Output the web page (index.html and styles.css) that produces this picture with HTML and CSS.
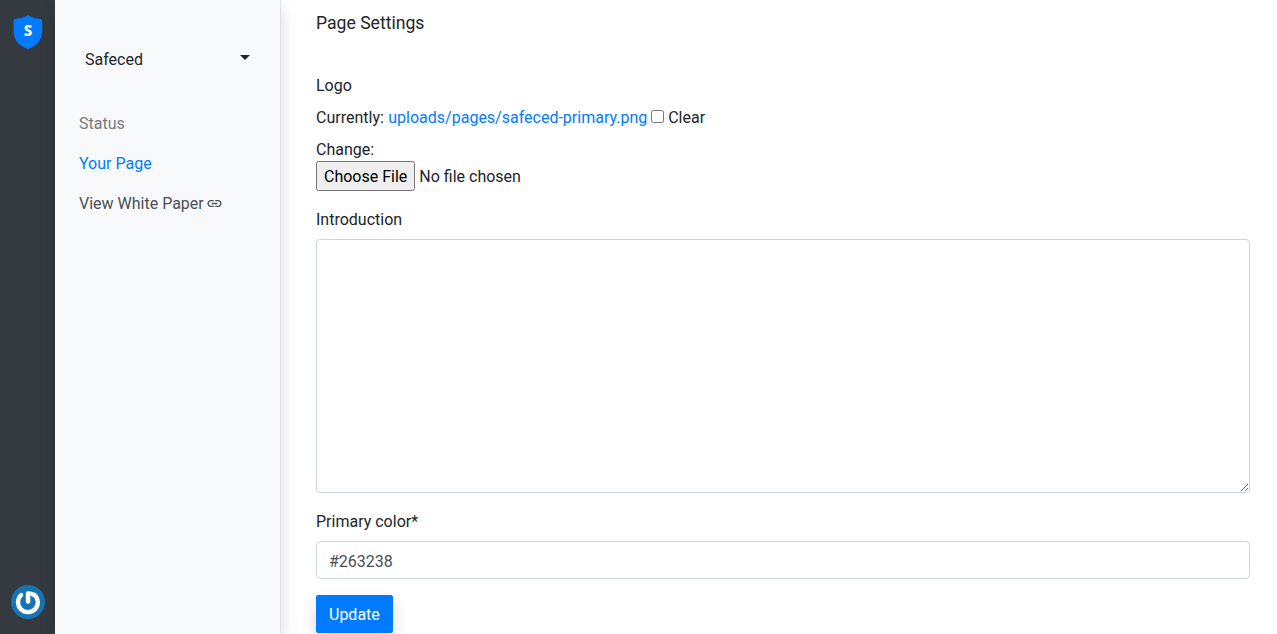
FILE: index.html
```html
<!DOCTYPE html>
<html lang="en">
<head>
<meta charset="utf-8">
<title>Page Settings</title>
<link rel="stylesheet" href="styles.css">
</head>
<body>
<div class="app">
  <aside class="rail">
    <a class="brand">
      <svg width="29" height="34" viewBox="0 0 29 34"><path fill="#007bff" d="M14.900 0C17.900 2.200 22.700 3.600 27.800 4.100Q29.200 4.300 29.200 5.700V16C29.200 25 23.800 30.700 14.900 34C6 30.700 .6 25 .6 16V5.700Q.6 4.300 2 4.100C7.100 3.600 11.900 2.200 14.900 0Z"/><text class="brand-letter" x="15" y="20.500" text-anchor="middle">S</text></svg>
    </a>
    <svg class="avatar" width="34" height="34" viewBox="0 0 34 34"><circle cx="17" cy="17" r="17" fill="#1774b3"/><path d="M10.200 10A9.900 9.900 0 1 0 23.400 9.800" fill="none" stroke="#fff" stroke-width="4.300" stroke-linecap="round"/><path d="M14.800 8.200Q14.800 6.200 17 6.200Q21 6.300 24.500 8.500L22 12L19.300 10.300V17Q19.300 18.800 17 18.800Q14.800 18.800 14.800 17Z" fill="#fff"/></svg>
  </aside>
  <nav class="sidebar">
    <div class="project"><span>Safeced</span><i class="caret"></i></div>
    <a class="nav-item muted">Status</a>
    <a class="nav-item active">Your Page</a>
    <a class="nav-item">View White Paper
      <svg class="link-icon" width="17" height="17" viewBox="0 0 24 24"><path fill="currentColor" d="M3.900 12c0-1.710 1.390-3.100 3.100-3.100h4V7H7c-2.760 0-5 2.240-5 5s2.240 5 5 5h4v-1.900H7c-1.710 0-3.100-1.390-3.100-3.100zM8 13h8v-2H8v2zm9-6h-4v1.900h4c1.710 0 3.100 1.390 3.100 3.100s-1.390 3.100-3.100 3.100h-4V17h4c2.760 0 5-2.240 5-5s-2.240-5-5-5z"/></svg>
    </a>
  </nav>
  <main class="content">
    <h1 class="title">Page Settings</h1>
    <form>
      <div class="group">
        <label class="label">Logo</label>
        <div class="current">Currently: <a class="link">uploads/pages/safeced-primary.png</a><input class="check" type="checkbox" id="clear"><label for="clear">Clear</label></div>
        <div class="change">Change:</div>
        <input class="file" type="file">
      </div>
      <div class="group">
        <label class="label" for="intro">Introduction</label>
        <textarea class="control area" id="intro"></textarea>
      </div>
      <div class="group">
        <label class="label" for="color">Primary color*</label>
        <input class="control" id="color" type="text" value="#263238">
      </div>
      <button class="button" type="button">Update</button>
    </form>
  </main>
</div>
</body>
</html>
```
FILE: styles.css
```css
*, *::before, *::after { box-sizing: border-box; }
body {
  margin: 0;
  font: 16px/24px Roboto, sans-serif;
  color: #212529;
  background: #fff;
}
.app { display: flex; height: 100vh; overflow: hidden; }
.rail {
  width: 55px;
  padding: 15px 0;
  background: #343a40;
  display: flex;
  flex-direction: column;
  justify-content: space-between;
  align-items: center;
}
.brand, .brand svg, .avatar { display: block; }
.brand svg { overflow: visible; }
.brand-letter { font: 800 15px "Noto Sans", sans-serif; fill: #fff; }
.sidebar {
  width: 226px;
  padding: 48px 24px 0;
  background: #f8f9fb;
  border-right: 1px solid #dee2e6;
  box-shadow: 0 8px 16px rgba(0, 0, 0, .15);
}
.project {
  display: flex;
  justify-content: space-between;
  align-items: center;
  padding: 0 6px;
  margin-bottom: 40px;
}
.caret {
  border: 5px solid transparent;
  border-top-color: #212529;
  border-bottom: 0;
  margin-bottom: 5px;
}
.nav-item { display: block; height: 24px; margin-bottom: 16px; color: #495057; white-space: nowrap; }
.muted { color: #777b7f; }
.active, .link { color: #007bff; }
.link-icon { vertical-align: -3px; margin: -2px 0 0 -2px; }
.content { flex: 1; padding: 11px 27px 0 35px; }
.title { margin: 0 0 38px; font-size: 17.6px; line-height: 24px; font-weight: 400; }
.group { margin-bottom: 16px; }
.label { display: block; padding-top: 1px; margin-bottom: 7px; }
.current { display: flex; align-items: center; padding-top: 1px; margin-bottom: 7px; white-space: pre; }
.link { margin-left: .5px; }
.check { margin: 0 4.5px 3px 3.5px; }
.change { height: 24px; padding-top: 1px; }
.file { display: block; width: 100%; height: 30px; font: inherit; }
.file::file-selector-button { height: 30px; padding: 2px 6px 1px; font-family: inherit; font-size: 16px; }
.control {
  display: block;
  width: 100%;
  height: 38px;
  padding: 7px 12px 5px;
  font: inherit;
  color: #495057;
  background: #fff;
  border: 1px solid #ced4da;
  border-radius: 4px;
}
.area { height: 254px; resize: vertical; }
.button {
  height: 38px;
  padding: 7px 12px 5px;
  font: inherit;
  color: #fff;
  background: #007bff;
  border: 1px solid #007bff;
  border-radius: 2px;
  box-shadow: 0 8px 16px rgba(0, 0, 0, .15);
}
```
